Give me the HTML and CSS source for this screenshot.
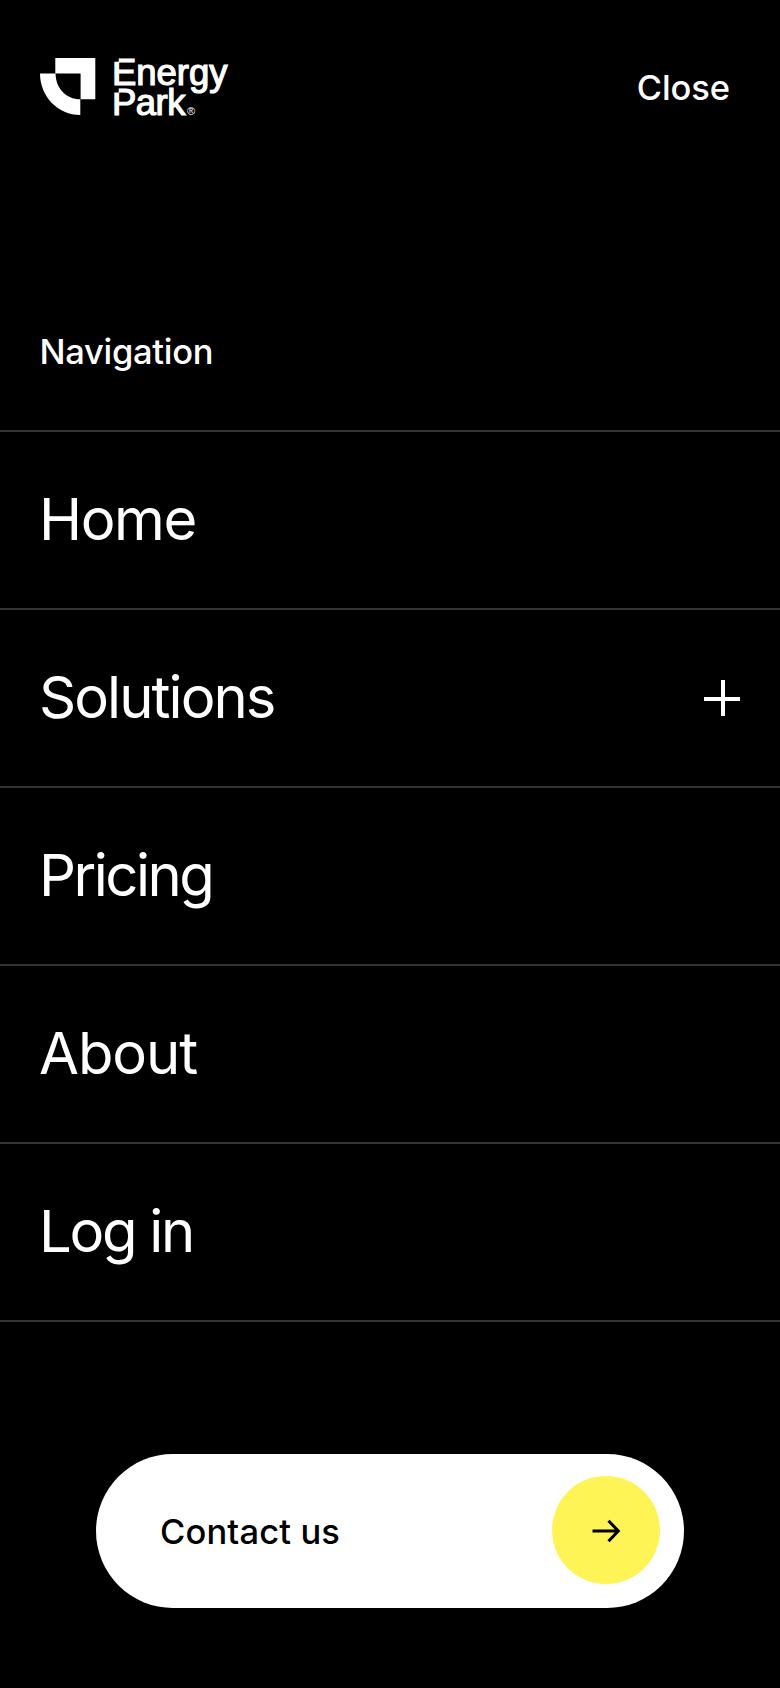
FILE: index.html
```html
<!DOCTYPE html>
<html lang="en">
<head>
<meta charset="utf-8">
<meta name="viewport" content="width=device-width">
<title>Energy Park</title>
<link rel="stylesheet" href="styles.css">
</head>
<body>
<div class="menu">
  <header class="header">
    <a class="logo" aria-label="Energy Park">
      <svg width="190" height="64" viewBox="40 56 190 64">
        <path class="mark" d="M55.3 58H95.3V99.3H80.6V73.5H55.3Z"/>
        <path class="mark" d="M40 73.5H55.6C55.6 88 66 99.3 80.3 99.3V115C58 115 40 96.5 40 73.5Z"/>
        <text class="word" x="112" y="84.7" textLength="115.5">Energy</text>
        <text class="word" x="112" y="114.9" textLength="73.5">Park</text>
        <text class="reg" x="187" y="115.3">®</text>
        <path class="notch" d="M112 56h6.7v5.7h-6.7zM112 86.5h6.7v6h-6.7z"/>
      </svg>
    </a>
    <button class="close">Close</button>
  </header>
  <h2 class="label">Navigation</h2>
  <nav class="nav">
    <a class="item home">Home</a>
    <a class="item solutions"><span>Solutions</span>
      <svg class="plus" width="36" height="36" viewBox="0 0 36 36"><path d="M0 17h36v4H0zM17 0h4v36h-4z"/></svg>
    </a>
    <a class="item pricing">Pricing</a>
    <a class="item about">About</a>
    <a class="item login">Log in</a>
  </nav>
  <a class="contact">
    <span class="contact-text">Contact us</span>
    <span class="circle">
      <svg width="30" height="26" viewBox="0 0 30 26"><path d="M1.5 14H27M17.5 3.7L27.3 14L17.5 24.3"/></svg>
    </span>
  </a>
</div>
</body>
</html>
```
FILE: styles.css
```css
* { box-sizing: border-box; }
body { margin: 0; background: #000; color: #fff; font-family: Inter, "Liberation Sans", sans-serif; }
.menu { height: 1688px; display: flex; flex-direction: column; overflow: hidden; }
.header { display: flex; justify-content: space-between; align-items: flex-start; padding: 56px 50px 0 40px; height: 326px; }
.logo svg { display: block; overflow: visible; }
.mark { fill: #fff; }
.word { fill: #fff; stroke: #fff; stroke-width: 1.2px; font: 36.5px "Liberation Sans", sans-serif; }
.reg { fill: #fff; font: 11px "Liberation Sans", sans-serif; }
.notch { fill: #000; }
.close { border: 0; padding: 0; margin: 11px 0 0; background: none; color: #fff; font: 500 34.5px/42px Inter, sans-serif; letter-spacing: -0.1px; }
.label { margin: 0; height: 104px; padding-left: 39.5px; font-size: 34.5px; font-weight: 500; line-height: 52px; letter-spacing: -0.3px; }
.nav { border-top: 2px solid #333; }
.item { display: flex; align-items: center; justify-content: space-between; height: 178px; padding: 0 40px 2px 39px; border-bottom: 2px solid #333; font-size: 58px; line-height: 70px; letter-spacing: -2.5px; }
.home { letter-spacing: -1.4px; }
.solutions { letter-spacing: -1.95px; }
.about { letter-spacing: -1.1px; }
.login { letter-spacing: -2.3px; }
.plus { fill: #fff; margin-top: 2px; }
.contact { display: flex; align-items: center; justify-content: space-between; width: 588px; height: 154px; margin: 132px 0 0 96px; padding: 0 24px 0 64px; border-radius: 77px; background: #fff; color: #000; }
.contact-text { margin-top: 2px; font-size: 34.5px; font-weight: 500; line-height: 42px; letter-spacing: 0.15px; }
.circle { display: flex; align-items: center; justify-content: center; width: 108px; height: 108px; margin-bottom: 2px; border-radius: 50%; background: #fff456; }
.circle svg { fill: none; stroke: #000; stroke-width: 3px; }
```
